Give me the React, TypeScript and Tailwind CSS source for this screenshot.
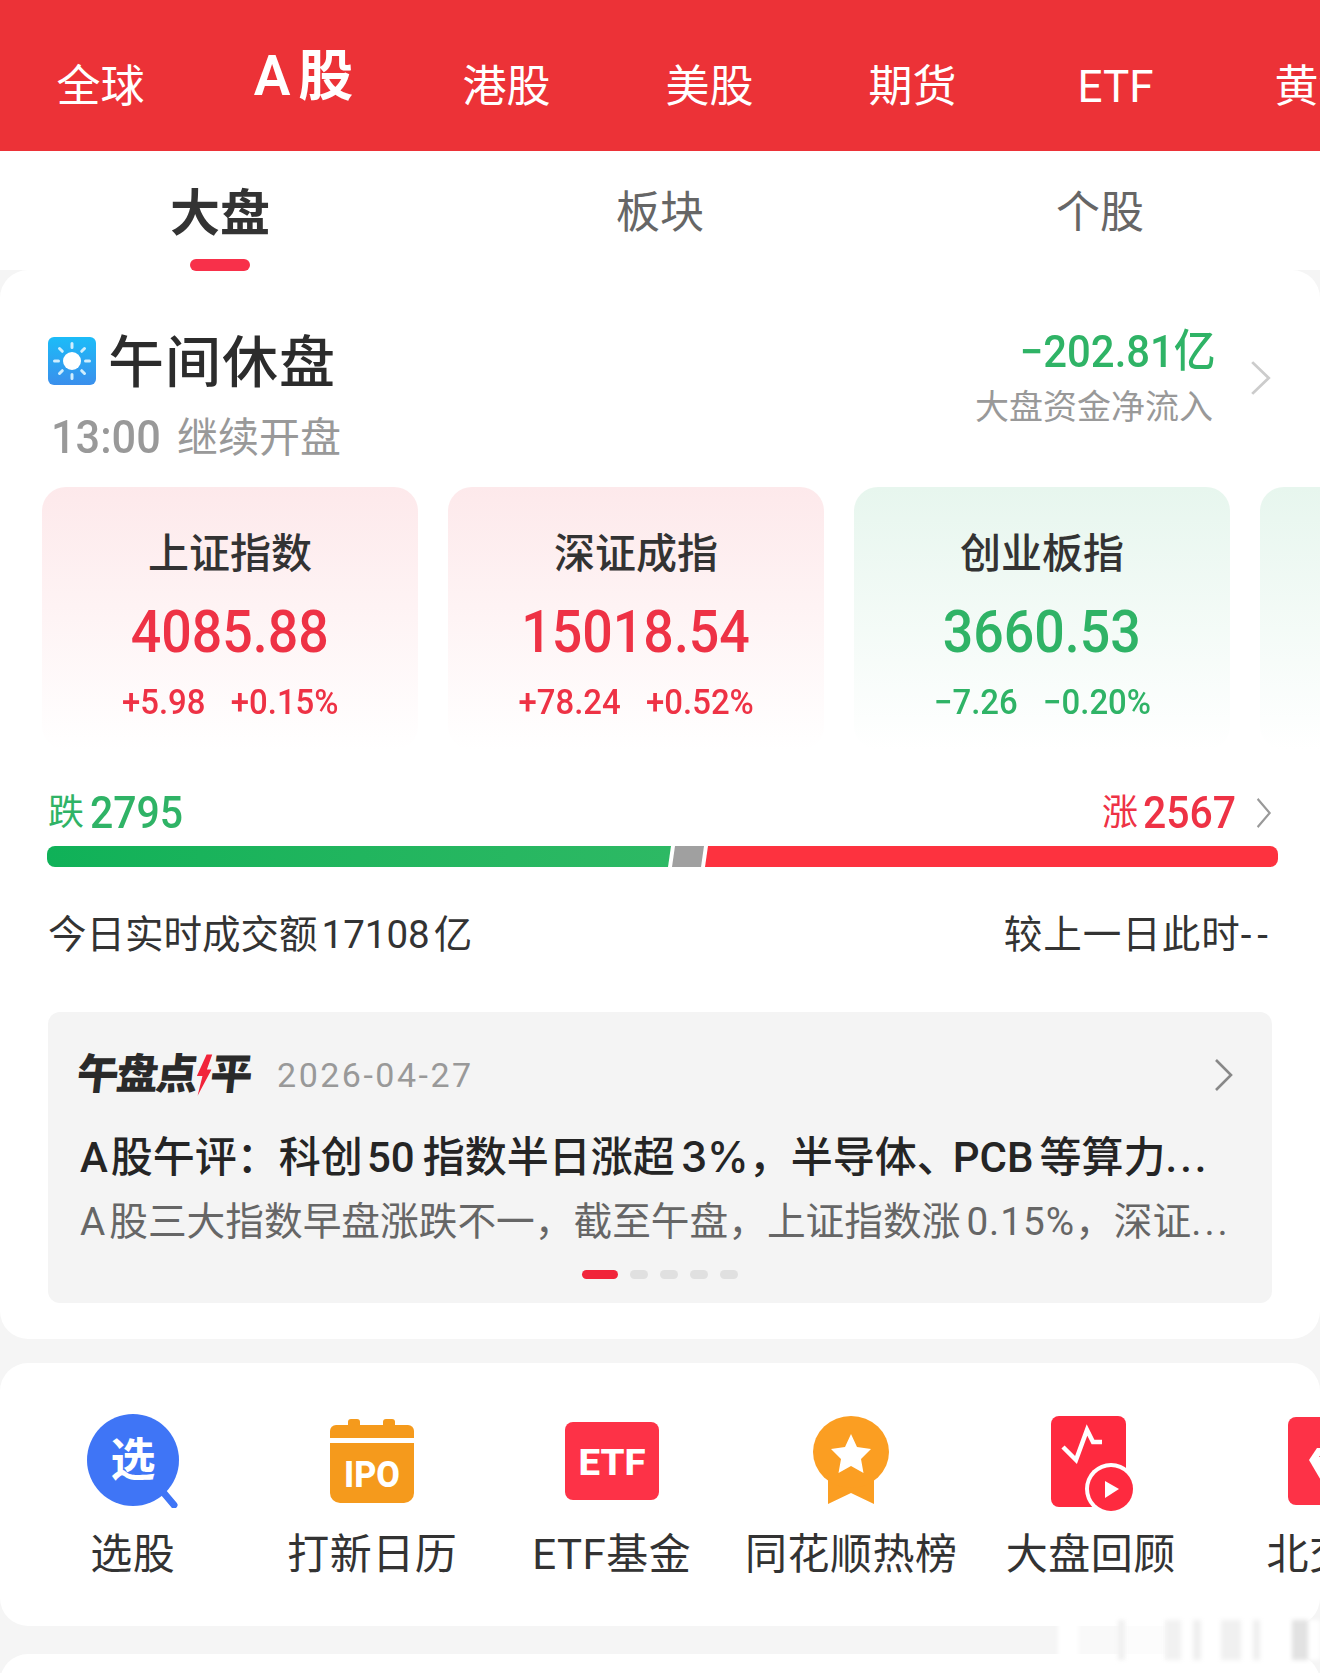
import React from "react";

const markets = ["全球", "A股", "港股", "美股", "期货", "ETF", "黄金"];

const indexes = [
  { name: "上证指数", value: "4085.88", diff: "+5.98", pct: "+0.15%", up: true },
  { name: "深证成指", value: "15018.54", diff: "+78.24", pct: "+0.52%", up: true },
  { name: "创业板指", value: "3660.53", diff: "−7.26", pct: "−0.20%", up: false },
  { name: "", value: "", diff: "", pct: "", up: false },
];

// blurred watermark streaks at the bottom right
const stripes = [
  "w-5 bg-white",
  "w-10 bg-white/40",
  "w-2 bg-[#f0f0f0]",
  "w-10 bg-white/70",
  "w-4 bg-[#f1f1f1]",
  "w-3 bg-white",
  "w-2 bg-[#efefef]",
  "w-5 bg-white",
  "w-5 bg-[#f0f0f0]",
  "w-3 bg-white",
  "w-2 bg-[#efefef]",
  "w-8 bg-white",
  "w-4 bg-[#e2e2e2]",
  "w-3 bg-white",
];

function Chevron({ className }: { className: string }) {
  return (
    <svg viewBox="0 0 20 34" fill="none" stroke="currentColor" strokeWidth="2.6" preserveAspectRatio="none" className={className}>
      <path d="M2 2l15 15L2 32" />
    </svg>
  );
}

function SunIcon() {
  return (
    <svg viewBox="0 0 48 48" className="w-12 h-12 shrink-0 -mt-1">
      <defs>
        <linearGradient id="sky" x1="0" y1="0" x2="0" y2="1">
          <stop offset="0" stopColor="#1cbcf8" />
          <stop offset="1" stopColor="#3a8fec" />
        </linearGradient>
      </defs>
      <rect width="48" height="48" rx="6" fill="url(#sky)" />
      <circle cx="24" cy="24" r="9" fill="#fff" />
      <g stroke="#cfeefe" strokeWidth="3" strokeLinecap="round">
        <path d="M24 6.500v4M24 37.500v4M6.500 24h4M37.500 24h4M11.500 11.500l2.800 2.800M33.700 33.700l2.800 2.800M36.500 11.500l-2.800 2.800M14.300 33.700l-2.800 2.800" />
      </g>
    </svg>
  );
}

function PickIcon() {
  return (
    <svg viewBox="0 0 92 94" className="w-[92px] h-[94px]">
      <path d="M76 78l11 13" stroke="#3f75f6" strokeWidth="7" strokeLinecap="round" />
      <circle cx="46" cy="46" r="46" fill="#3f75f6" />
      <text x="46" y="62" textAnchor="middle" fontSize="45" fontWeight="600" fill="#fff">选</text>
    </svg>
  );
}

function IpoIcon() {
  return (
    <svg viewBox="0 0 84 84" className="w-[84px] h-[84px]">
      <rect x="18" y="0" width="12" height="12" rx="3" fill="#f59a1c" />
      <rect x="53" y="0" width="12" height="12" rx="3" fill="#f59a1c" />
      <path d="M0 12a6 6 0 0 1 6-6h72a6 6 0 0 1 6 6v7H0z" fill="#f59a1c" />
      <path d="M0 24h84v50a10 10 0 0 1-10 10H10A10 10 0 0 1 0 74z" fill="#f59a1c" />
      <text x="42" y="68" textAnchor="middle" fontSize="36" fontWeight="800" fill="#fff" textLength="56" lengthAdjust="spacingAndGlyphs">IPO</text>
    </svg>
  );
}

function EtfIcon() {
  return (
    <svg viewBox="0 0 94 78" className="w-[94px] h-[78px]">
      <rect width="94" height="78" rx="8" fill="#fd3247" />
      <text x="47" y="53" textAnchor="middle" fontSize="37" fontWeight="800" fill="#fff" textLength="67" lengthAdjust="spacingAndGlyphs">ETF</text>
    </svg>
  );
}

function MedalIcon() {
  return (
    <svg viewBox="0 2 76 90" className="w-[76px] h-[90px]">
      <path d="M15 58v32l23-11 23 11V58z" fill="#fb9e22" />
      <ellipse cx="38" cy="38" rx="38" ry="36" fill="#fb9e22" />
      <path d="M38 20l6 13 14 2-10 10 2.500 14L38 52l-12.500 7L28 45 18 35l14-2z" fill="#fff" />
    </svg>
  );
}

function ReviewIcon() {
  return (
    <svg viewBox="-5 -6 90 102" className="w-[90px] h-[102px]">
      <rect x="0" y="0" width="75" height="91" rx="8" fill="#fe2a3f" />
      <path d="M12 31l13 13 11-30 6 12h9" stroke="#fff" strokeWidth="4.500" fill="none" />
      <circle cx="60" cy="73" r="26" fill="#fff" />
      <circle cx="60" cy="73" r="22" fill="#fe2a3f" />
      <path d="M54 65l14 8-14 9z" fill="#fff" />
    </svg>
  );
}

function NorthIcon() {
  return (
    <svg viewBox="0 0 84 88" className="w-[84px] h-[88px]">
      <rect width="84" height="88" rx="8" fill="#fd3247" />
      <path d="M21 43l8-12h30l8 12-23 39z" fill="#fff" />
      <path d="M31 40l7-8h13l7 8z" fill="#fd3247" />
    </svg>
  );
}

const tools = [
  { label: "选股", icon: <PickIcon /> },
  { label: "打新日历", icon: <IpoIcon /> },
  { label: "ETF基金", icon: <EtfIcon /> },
  { label: "同花顺热榜", icon: <MedalIcon /> },
  { label: "大盘回顾", icon: <ReviewIcon /> },
  { label: "北交所", icon: <NorthIcon /> },
];

export default function App() {
  return (
    <div className="relative w-[1320px] h-[1673px] overflow-hidden bg-[#f5f5f5] font-['Roboto','Noto_Sans_CJK_SC',sans-serif] text-[#333]">
      {/* market tabs */}
      <div className="flex h-[151px] bg-[#ec3237] text-white">
        {markets.map((m) => (
          <div key={m} className="w-[203px] shrink-0 first:ml-[-1px] flex justify-center whitespace-nowrap">
            {m === "A股" ? (
              <span className="mt-[41px] text-[55px] leading-[70px] font-semibold">A<span className="ml-[8px]">股</span></span>
            ) : (
              <span className="mt-[57px] text-[44px] leading-[60px]">{m}</span>
            )}
          </div>
        ))}
      </div>

      {/* sub tabs */}
      <div className="grid grid-cols-3 h-[119px] bg-white">
        <div className="flex flex-col items-center">
          <span className="mt-[28px] text-[50px] leading-[70px] font-semibold">大盘</span>
          <span className="mt-[10px] w-[60px] h-3 rounded-full bg-[#f8304a]" />
        </div>
        <div className="flex justify-center">
          <span className="mt-[32px] text-[44px] leading-[60px] text-[#666]">板块</span>
        </div>
        <div className="flex justify-center">
          <span className="mt-[32px] text-[44px] leading-[60px] text-[#666]">个股</span>
        </div>
      </div>

      {/* market overview */}
      <div className="h-[1069px] bg-white rounded-[28px] overflow-hidden">
        <div className="flex justify-between items-start h-[217px] pl-12 pr-[48px] pt-[54px]">
          <div className="mt-[8px]">
            <div className="flex items-center h-[62px] gap-[12px]">
              <SunIcon />
              <span className="text-[56px] leading-[62px] font-medium tracking-[1px] text-[#2c2c2c]">午间休盘</span>
            </div>
            <div className="flex items-center h-[60px] mt-[13px] pl-[3px] text-[#999]">
              <span className="w-[108px] origin-left scale-x-[.94] text-[46px] font-medium">13:00</span>
              <span className="ml-[18px] mt-1 text-[41px]">继续开盘</span>
            </div>
          </div>
          <div className="flex items-center gap-[37px]">
            <div className="flex flex-col items-end">
              <span className="mr-[-3px] origin-right scale-x-[.93] text-[45px] leading-[56px] font-medium text-[#2fb366]">−202.81亿</span>
              <span className="mt-[3px] text-[34px] leading-[48px] text-[#999]">大盘资金净流入</span>
            </div>
            <Chevron className="w-[22px] h-[36px] text-[#ccc]" />
          </div>
        </div>

        <div className="flex gap-[30px] pl-[42px]">
          {indexes.map((x, i) => (
            <div
              key={i}
              className={`w-[376px] h-[263px] shrink-0 rounded-[24px] flex flex-col items-center bg-gradient-to-b to-white ${
                x.up ? "from-[#fde9eb]" : "from-[#e7f6ee]"
              }`}
            >
              <span className="mt-[39px] h-[56px] text-[41px] leading-[56px] font-medium text-[#333]">{x.name}</span>
              <span className={`mt-[17px] h-[66px] scale-x-[.91] text-[59px] leading-[66px] font-medium ${x.up ? "text-[#ee3245]" : "text-[#2fb366]"}`}>{x.value}</span>
              <div className={`mt-[16px] flex gap-[27px] scale-x-[.94] text-[35px] leading-[44px] font-medium ${x.up ? "text-[#ee3245]" : "text-[#2fb366]"}`}>
                <span>{x.diff}</span>
                <span>{x.pct}</span>
              </div>
            </div>
          ))}
        </div>

        {/* rise and fall */}
        <div className="flex items-center justify-between h-[58px] mt-[34px] pl-12 pr-[48px]">
          <div className="flex items-center gap-[6px] text-[#2fb366]">
            <span className="text-[36px]">跌</span>
            <span className="w-[92px] origin-left scale-x-[.91] text-[45px] font-medium">2795</span>
          </div>
          <div className="flex items-center text-[#ee3245]">
            <span className="text-[36px]">涨</span>
            <span className="ml-[5px] w-[92px] origin-left scale-x-[.91] text-[45px] font-medium">2567</span>
            <Chevron className="ml-[21px] w-[16px] h-[32px] text-[#999]" />
          </div>
        </div>
        <div className="flex h-[21px] mt-[4px] ml-[47px] mr-[42px]">
          <div className="w-[624px] rounded-l-lg bg-gradient-to-r from-[#0fb158] to-[#2db964] [clip-path:polygon(0_0,100%_0,calc(100%-3px)_100%,0_100%)]" />
          <div className="w-[32px] ml-[1px] bg-[#a0a0a0] [clip-path:polygon(3px_0,100%_0,calc(100%-3px)_100%,0_100%)]" />
          <div className="flex-1 ml-[1px] rounded-r-lg bg-[#fd323f] [clip-path:polygon(3px_0,100%_0,100%_100%,0_100%)]" />
        </div>

        <div className="flex justify-between h-[58px] mt-[39px] pl-12 pr-[46px] items-center text-[38.500px] text-[#333]">
          <span>今日实时成交额<span className="mx-[4px]">17108</span>亿</span>
          <span className="tracking-[1px]">较上一日此时<span className="tracking-[6px]">--</span></span>
        </div>

        {/* midday review */}
        <div className="relative mx-12 mt-[48px] h-[291px] rounded-xl bg-[#f4f4f4] px-8">
          <div className="flex items-center h-[50px] pt-[38px] box-content">
            <div className="flex items-center ml-[-3px] text-[42px] leading-[50px] tracking-[-2.500px] font-black text-[#2a2a2a] -skew-x-6">
              <span>午盘点</span>
              <svg viewBox="0 0 16 44" className="w-[15px] h-[44px] shrink-0">
                <path d="M9 0h6l-4 16h5L4 44l3-21H1z" fill="#f1243a" />
              </svg>
              <span>平</span>
            </div>
            <span className="ml-[27px] text-[34px] tracking-[2.500px] text-[#999]">2026-04-27</span>
          </div>
          <Chevron className="absolute right-[38px] top-[46px] w-5 h-[34px] text-[#888]" />
          <div className="mt-[29px] text-[42px] leading-[56px] font-medium whitespace-nowrap text-[#252525]">
            A<span className="ml-[3px]">股午评：科创</span>
            <span className="ml-[4px] mr-[8px]">50</span>指数半日涨超
            <span className="ml-[6px] font-['Inter']">3%</span>，半导体、
            <span className="ml-[-6px] mr-[6px]">PCB</span>等算力
            <span className="tracking-[3px]">...</span>
          </div>
          <div className="mt-[8px] text-[38.700px] leading-[56px] whitespace-nowrap text-[#666]">
            A<span className="ml-[4px]">股三大指数早盘涨跌不一，截至午盘，上证指数涨</span>
            <span className="ml-[6px] tracking-[1px]">0.15%</span>，深证
            <span className="tracking-[3px]">...</span>
          </div>
          <div className="absolute left-[534px] top-[258px] flex gap-3">
            <span className="w-9 h-[9px] rounded-full bg-[#f1243a]" />
            <span className="w-[18px] h-[9px] rounded-full bg-[#e0e0e0]" />
            <span className="w-[18px] h-[9px] rounded-full bg-[#e0e0e0]" />
            <span className="w-[18px] h-[9px] rounded-full bg-[#e0e0e0]" />
            <span className="w-[18px] h-[9px] rounded-full bg-[#e0e0e0]" />
          </div>
        </div>
      </div>

      {/* tools */}
      <div className="flex h-[263px] mt-6 pl-[13px] bg-white rounded-[28px] overflow-hidden">
        {tools.map((t) => (
          <div key={t.label} className="w-[239.5px] shrink-0 flex flex-col items-center">
            <div className="h-[100px] mt-[48px] flex items-center justify-center">{t.icon}</div>
            <span className="mt-[16px] text-[42px] leading-[56px] tracking-[.5px] whitespace-nowrap">{t.label}</span>
          </div>
        ))}
      </div>
      <div className="h-10 mt-7 bg-white rounded-t-[28px]" />

      {/* watermark */}
      <div className="absolute left-[1058px] top-[1620px] flex h-10 w-[262px] blur-[2px]">
        {stripes.map((s, i) => (
          <div key={i} className={s} />
        ))}
      </div>
    </div>
  );
}
